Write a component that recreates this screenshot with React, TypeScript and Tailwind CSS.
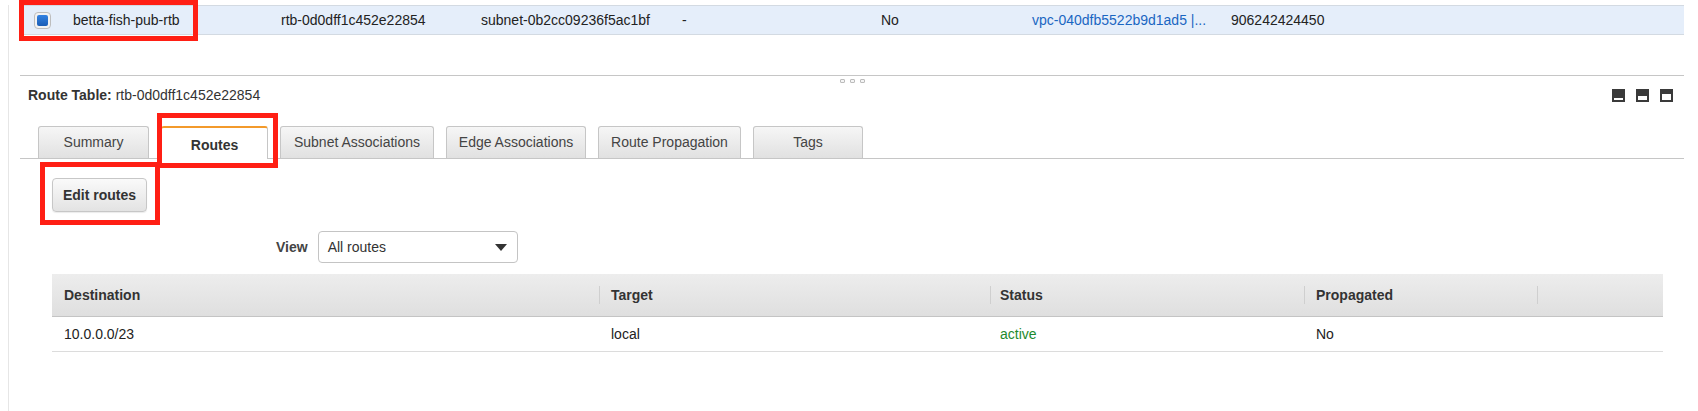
import React from "react";

const tabs = [
  { label: "Summary", w: "w-[111px]" },
  { label: "Routes", w: "w-[107px]", active: true },
  { label: "Subnet Associations", w: "w-[154px]" },
  { label: "Edge Associations", w: "w-[140px]" },
  { label: "Route Propagation", w: "w-[143px]" },
  { label: "Tags", w: "w-[110px]" },
];

function DockIcon({ fill }: { fill: string }) {
  return (
    <div className="w-[13px] h-[13px] bg-[#3a3a3a] p-[2px] flex flex-col justify-end">
      <div className={`w-full bg-white ${fill}`} />
    </div>
  );
}

function Grip() {
  return <div className="w-[5px] h-[4px] border border-[#bcbcbc] rounded-[1px] bg-[#f4f4f4]" />;
}

export default function App() {
  return (
    <div className="relative w-[1698px] h-[411px] overflow-hidden bg-white font-['Liberation_Sans',Arial,sans-serif] text-[14px] text-[#222]">
      <div className="ml-[8px] h-full border-l border-[#e6e6e6] pl-[11px] pr-[14px]">
        {/* selected route table row */}
        <div className="mt-[5px] h-[30px] flex items-center bg-[#e5eefa] border-y border-[#d3dae2]">
          <div className="w-[53px] pl-[14px]">
            <div className="w-[17px] h-[17px] rounded-[4px] border border-[#bdbdbd] bg-[#f2f2f2] p-[2px]">
              <div className="w-full h-full rounded-[2px] bg-linear-to-b from-[#3282e2] to-[#1a5db5]" />
            </div>
          </div>
          <div className="w-[208px]">betta-fish-pub-rtb</div>
          <div className="w-[200px]">rtb-0d0dff1c452e22854</div>
          <div className="w-[201px]">subnet-0b2cc09236f5ac1bf</div>
          <div className="w-[199px]">-</div>
          <div className="w-[151px]">No</div>
          <div className="w-[199px] text-[#1a66c2]">vpc-040dfb5522b9d1ad5 |...</div>
          <div className="flex-1">906242424450</div>
        </div>

        {/* split divider */}
        <div className="mt-[40px] border-t border-[#c6c6c6]" />
        <div className="mt-[3px] h-[5px] flex justify-center gap-[5px]">
          <Grip />
          <Grip />
          <Grip />
        </div>

        {/* detail header */}
        <div className="mt-[1px] h-[20px] flex items-center justify-between pl-[8px] pr-[11px]">
          <div className="text-[#333]">
            <span className="font-bold">Route Table:</span> rtb-0d0dff1c452e22854
          </div>
          <div className="flex gap-[11px]">
            <DockIcon fill="h-[2px]" />
            <DockIcon fill="h-[4px]" />
            <DockIcon fill="h-[6px]" />
          </div>
        </div>

        {/* tabs */}
        <div className="mt-[21px] flex items-end gap-[12px] pl-[18px] border-b border-[#c6c6c6]">
          {tabs.map((t) =>
            t.active ? (
              <div
                key={t.label}
                className={`${t.w} h-[33px] -mb-px flex items-center justify-center bg-white border-x border-[#c6c6c6] border-t-2 border-t-[#f39a2b] rounded-t-[3px] font-bold text-[#333] pt-[3px]`}
              >
                {t.label}
              </div>
            ) : (
              <div
                key={t.label}
                className={`${t.w} h-[32px] flex items-center justify-center bg-linear-to-b from-[#f6f6f6] to-[#e1e1e1] border border-b-0 border-[#c6c6c6] rounded-t-[3px] text-[#444]`}
              >
                {t.label}
              </div>
            )
          )}
        </div>

        {/* tab body */}
        <div className="pl-[32px] pr-[21px]">
          <button className="mt-[19px] w-[95px] h-[34px] rounded-[4px] border border-[#c7c7c7] bg-linear-to-b from-[#fafafa] to-[#e3e3e3] font-bold text-[#333] shadow-[0_1px_1px_rgba(0,0,0,0.08)]">
            Edit routes
          </button>

          <div className="mt-[19px] flex items-center pl-[224px]">
            <span className="font-bold text-[#444] mr-[10px]">View</span>
            <div className="w-[200px] h-[32px] flex items-center justify-between rounded-[4px] border border-[#c4c4c4] bg-white pl-[9px] pr-[10px] text-[#333]">
              <span>All routes</span>
              <svg width="12" height="7" viewBox="0 0 12 7">
                <path d="M0 0 L12 0 L6 7 Z" fill="#333" />
              </svg>
            </div>
          </div>

          {/* routes table */}
          <div className="mt-[11px]">
            <div className="h-[43px] flex items-center bg-linear-to-b from-[#ededed] to-[#dfdfdf] border-b border-[#c4c4c4] font-bold text-[#333]">
              <div className="w-[547px] pl-[12px]">Destination</div>
              <div className="w-[391px] pl-[11px] border-l border-[#cfcfcf] h-[18px] leading-[18px]">Target</div>
              <div className="w-[314px] pl-[9px] border-l border-[#cfcfcf] h-[18px] leading-[18px]">Status</div>
              <div className="w-[233px] pl-[11px] border-l border-[#cfcfcf] h-[18px] leading-[18px]">Propagated</div>
              <div className="flex-1 border-l border-[#cfcfcf] h-[18px]" />
            </div>
            <div className="h-[35px] flex items-center border-b border-[#dcdcdc]">
              <div className="w-[547px] pl-[12px]">10.0.0.0/23</div>
              <div className="w-[391px] pl-[12px]">local</div>
              <div className="w-[314px] pl-[10px] text-[#1d8a2e]">active</div>
              <div className="w-[233px] pl-[12px]">No</div>
              <div className="flex-1" />
            </div>
          </div>
        </div>
      </div>

      {/* red annotation boxes */}
      <div className="absolute left-[19px] top-0 w-[179px] h-[41px] border-[5px] border-[#ff1f14]" />
      <div className="absolute left-[157px] top-[113px] w-[121px] h-[55px] border-[5px] border-[#ff1f14]" />
      <div className="absolute left-[40px] top-[162px] w-[120px] h-[63px] border-[5px] border-[#ff1f14]" />
    </div>
  );
}
